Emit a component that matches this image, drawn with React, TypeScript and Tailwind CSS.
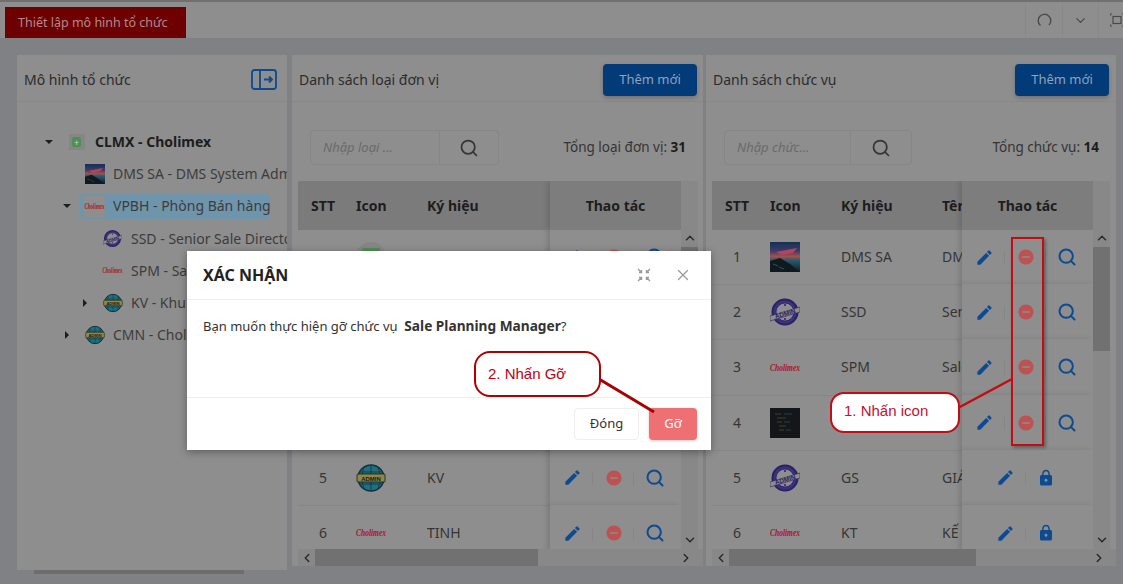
import React from "react";
import { MdEdit, MdRemoveCircle, MdLock } from "react-icons/md";
import { ChevronUp, ChevronDown, ChevronLeft, ChevronRight, Search, X } from "lucide-react";

const Photo = ({ s = 30 }: { s?: number }) => (
  <svg width={s} height={s} viewBox="0 0 30 30" className="shrink-0">
    <defs>
      <linearGradient id="sky" x1="0" y1="0" x2="0" y2="1">
        <stop offset="0" stopColor="#14304f" />
        <stop offset="0.3" stopColor="#3d3a6e" />
        <stop offset="0.48" stopColor="#a5504a" />
        <stop offset="0.6" stopColor="#2c5a70" />
        <stop offset="1" stopColor="#0e1e26" />
      </linearGradient>
    </defs>
    <rect width="30" height="30" fill="url(#sky)" />
    <path d="M0 19 L10 16 L20 22 L30 30 L0 30Z" fill="#0f1a20" />
    <path d="M6 10 L27 6 L23 11 L12 13Z" fill="#b0465c" />
    <path d="M3 22l5 2M9 25l5 2" stroke="#33505e" strokeWidth="1" />
  </svg>
);

const Code = ({ s = 30 }: { s?: number }) => (
  <svg width={s} height={s} viewBox="0 0 30 30" className="shrink-0">
    <rect width="30" height="30" fill="#14171a" />
    <path d="M5 6h6M7 10h9M7 14h5M9 18h7M9 22h5" stroke="#3f4330" strokeWidth="1" />
    <path d="M14 14h6M16 22h5M14 6h8" stroke="#24414d" strokeWidth="1" />
  </svg>
);

const Stamp = ({ s = 30 }: { s?: number }) => (
  <svg width={s} height={s} viewBox="0 0 30 30" className="shrink-0">
    <circle cx="15" cy="15" r="12.500" fill="#3a3180" stroke="#2a2260" strokeWidth="2" />
    <circle cx="15" cy="15" r="9" fill="#8e8e8e" stroke="#2a2260" strokeWidth="0.8" />
    <circle cx="15" cy="8" r="1" fill="#2a2260" />
    <circle cx="15" cy="22" r="1" fill="#2a2260" />
    <path d="M0 19 L30 10 L30 15 L0 24Z" fill="#8e8e8e" stroke="#2a2260" strokeWidth="0.6" />
    <text x="15" y="19" textAnchor="middle" fontSize="6.5" fontWeight="700" fill="#2a2260" transform="rotate(-16 15 16.500)" fontFamily="Liberation Sans, sans-serif">ADMIN</text>
  </svg>
);

const Globe = ({ s = 30 }: { s?: number }) => (
  <svg width={s} height={s} viewBox="0 0 30 30" className="shrink-0">
    <circle cx="15" cy="15" r="13" fill="#1f6f82" stroke="#12343d" strokeWidth="1.5" />
    <path d="M3 9h24M3 21h24M15 2v26M8 4q-4 11 0 22M22 4q4 11 0 22" stroke="#12343d" strokeWidth="0.8" fill="none" />
    <rect x="1" y="11" width="28" height="8" rx="1" fill="#8f8748" stroke="#1a1a10" strokeWidth="0.8" />
    <text x="15" y="17.500" textAnchor="middle" fontSize="6" fontWeight="700" fill="#1a1a10" fontFamily="Liberation Sans, sans-serif">ADMIN</text>
  </svg>
);

const Chol = ({ w = 30, cls = "text-[7.5px]" }: { w?: number; cls?: string }) => (
  <span
    className={`shrink-0 scale-y-150 text-center font-bold italic leading-none text-[#a8181e] ${cls}`}
    style={{ width: w, fontFamily: '"Liberation Serif", serif' }}
  >
    Cholimex
  </span>
);

const Plus = ({ box = 16, cls = "" }: { box?: number; cls?: string }) => (
  <span className={`flex items-center justify-center bg-[#868686] ${cls}`} style={{ width: box, height: box }}>
    <span
      className="flex items-center justify-center rounded-[2px] bg-[#4f8f55] text-[9px] leading-none text-[#c5dcc5]"
      style={{ width: box * 0.62, height: box * 0.62 }}
    >
      +
    </span>
  </span>
);

const Pencil = () => <MdEdit className="text-[#0c4a92]" size={19} />;
const Minus = () => <MdRemoveCircle className="text-[#bd5252]" size={18} />;
const Find = () => <Search className="text-[#0c4a92]" size={20} strokeWidth={2.4} />;
const Lock = () => <MdLock className="text-[#0c4a92]" size={18} />;

const Cell = ({ children, last }: { children: React.ReactNode; last?: boolean }) => (
  <div className="relative flex w-[41px] items-center justify-center">
    {children}
    {!last && <span className="absolute right-0 top-[3px] h-[14px] w-px bg-[#868686]" />}
  </div>
);

type Row = { n: number; icon: React.ReactNode; code: string; name?: string; locked?: boolean };

function Table({ rows, withName, width, thumb }: { rows: Row[]; withName: boolean; width: number; thumb: number }) {
  return (
    <div className="flex flex-col">
      <div className="flex h-[368px]">
        <div className="overflow-hidden" style={{ width }}>
          <div className="flex h-[49px] items-center bg-[#7b7b7b] text-sm font-bold text-[#1d1d1d]">
            <div className="w-[50px] shrink-0 text-center">STT</div>
            <div className="w-[71px] shrink-0 pl-2">Icon</div>
            <div className="w-[109px] shrink-0 pl-2">Ký hiệu</div>
            <div className="w-[20px] shrink-0 overflow-hidden">{withName ? "Tên" : ""}</div>
            <div className="ml-auto flex h-full w-[131px] shrink-0 items-center justify-center bg-[#7d7d7d] shadow-[-3px_0_5px_rgba(0,0,0,0.12)]">Thao tác</div>
          </div>
          <div className="h-[319px] overflow-hidden">
            {rows.map((r) => (
              <div key={r.n} className="flex h-[55.2px] items-center border-b border-[#868686] text-sm text-[#353535]">
                <div className="w-[50px] shrink-0 text-center">{r.n}</div>
                <div className="flex w-[71px] shrink-0 items-center pl-2">{r.icon}</div>
                <div className="w-[109px] shrink-0 pl-2">{r.code}</div>
                <div className="w-[20px] shrink-0 overflow-hidden whitespace-nowrap">{r.name}</div>
                <div className="ml-auto flex h-[56px] w-[131px] shrink-0 items-center justify-center bg-[#8e8e8e] pr-[4px] shadow-[-3px_0_5px_rgba(0,0,0,0.12)]">
                  {r.locked ? (
                    <>
                      <Cell><Pencil /></Cell>
                      <Cell last><Lock /></Cell>
                    </>
                  ) : (
                    <>
                      <Cell><Pencil /></Cell>
                      <Cell><Minus /></Cell>
                      <Cell last><Find /></Cell>
                    </>
                  )}
                </div>
              </div>
            ))}
          </div>
        </div>
        <div className="flex w-[17px] flex-col bg-[#888888]">
          <div className="h-[48px]" />
          <div className="flex h-[18px] items-center justify-center"><ChevronUp size={14} strokeWidth={2.5} className="text-[#2a2a2a]" /></div>
          <div className="h-[104px] bg-[#717171]" />
          <div className="flex-1" />
          <div className="flex h-[18px] items-center justify-center"><ChevronDown size={14} strokeWidth={2.5} className="text-[#2a2a2a]" /></div>
        </div>
      </div>
      <div className="flex h-[17px] items-center bg-[#888888]">
        <div className="flex w-[17px] justify-center"><ChevronLeft size={14} strokeWidth={2.5} className="text-[#2a2a2a]" /></div>
        <div className="h-full bg-[#717171]" style={{ width: thumb }} />
        <div className="flex-1" />
        <div className="flex w-[34px] justify-center"><ChevronRight size={14} strokeWidth={2.5} className="text-[#2a2a2a]" /></div>
      </div>
    </div>
  );
}

function ListPanel({ title, ph, inputW, btnW, totalLabel, total, rows, withName, width, tableW, thumb, btnPad }: {
  title: string; ph: string; inputW: number; btnW: number; totalLabel: string; total: number; rows: Row[]; withName: boolean; width: number; tableW: number; thumb: number; btnPad: number;
}) {
  return (
    <section className="flex flex-col bg-[#8e8e8e]" style={{ width }}>
      <header className="flex h-[47px] items-center justify-between border-b border-[#888888] pl-[7px] pt-[3px] text-sm text-[#2c2c2c]" style={{ paddingRight: btnPad }}>
        <span>{title}</span>
        <button className="h-[32px] w-[94px] rounded bg-[#033a78] text-[13px] text-[#8fa3bd] shadow-[0_2px_4px_rgba(0,0,0,0.2)]">Thêm mới</button>
      </header>
      <div className="flex h-[79px] items-end justify-between pb-[16px] pl-[18px] pr-[17px]">
        <div className="flex h-[35px] rounded border border-[#868686]">
          <div className="flex items-center border-r border-[#868686] pl-3 text-[13px] italic text-[#6a6a6a]" style={{ width: inputW }}>{ph}</div>
          <div className="flex items-center justify-center" style={{ width: btnW }}><Search size={20} strokeWidth={2.1} className="text-[#353535]" /></div>
        </div>
        <span className="flex h-[35px] items-center text-[13.5px] text-[#353535]"><span>{totalLabel}: <b className="text-[#1d1d1d]">{total}</b></span></span>
      </div>
      <div className="pl-[6px]"><Table rows={rows} withName={withName} width={tableW} thumb={thumb} /></div>
    </section>
  );
}

const Caret = ({ open }: { open?: boolean }) =>
  open ? (
    <span className="h-0 w-0 border-x-[4px] border-t-[4px] border-x-transparent border-t-[#1d1d1d]" />
  ) : (
    <span className="h-0 w-0 border-y-[4px] border-l-[4px] border-y-transparent border-l-[#1d1d1d]" />
  );

function Tree({ indent, caret, icon, label, bold, active }: { indent: number; caret?: "open" | "closed"; icon: React.ReactNode; label: string; bold?: boolean; active?: boolean }) {
  return (
    <div className="relative flex h-[32.2px] items-center whitespace-nowrap text-sm text-[#3c3c3c]" style={{ paddingLeft: indent }}>
      {caret && (
        <span className="absolute flex w-[8px] justify-center" style={{ left: indent - 21 }}>
          <Caret open={caret === "open"} />
        </span>
      )}
      <div className={`flex h-[25px] items-center ${active ? "-ml-[4px] w-[190px] rounded-sm bg-[#6f95ad] pl-[4px]" : ""}`}>
        <span className="flex w-[21px] items-center justify-center">{icon}</span>
        <span className={`ml-[8px] ${bold ? "font-bold text-[#1d1d1d]" : ""}`}>{label}</span>
      </div>
    </div>
  );
}

const rowsA: Row[] = [
  { n: 1, icon: <Plus box={30} cls="rounded-full" />, code: "" },
  { n: 2, icon: <Stamp />, code: "" },
  { n: 3, icon: <Chol />, code: "" },
  { n: 4, icon: <Code />, code: "" },
  { n: 5, icon: <Globe />, code: "KV" },
  { n: 6, icon: <Chol />, code: "TINH" },
];
const rowsB: Row[] = [
  { n: 1, icon: <Photo />, code: "DMS SA", name: "DMS" },
  { n: 2, icon: <Stamp />, code: "SSD", name: "Senior" },
  { n: 3, icon: <Chol />, code: "SPM", name: "Sale" },
  { n: 4, icon: <Code />, code: "", name: "" },
  { n: 5, icon: <Stamp />, code: "GS", name: "GIÁM", locked: true },
  { n: 6, icon: <Chol />, code: "KT", name: "KẾ TOÁN", locked: true },
];

export default function App() {
  return (
    <div className="relative flex h-[584px] w-[1123px] flex-col overflow-hidden bg-[#7f8185]" style={{ fontFamily: '"Noto Sans", sans-serif' }}>
      <div className="h-[2px] bg-[#707070]" />
      <div className="flex h-[36px] items-end justify-between bg-[#8e8e8e] pl-[5px]">
        <div className="flex h-[31px] w-[181px] items-center bg-[#6d0000] pl-[13px] pt-[1px] text-[12.5px] text-[#b38a8f]">Thiết lập mô hình tổ chức</div>
        <div className="flex h-[36px] items-center text-[#4a4a4a]">
          <div className="flex h-full w-[37px] items-center justify-center border-l border-[#888888]">
            <svg width="15" height="15" viewBox="0 0 15 15" fill="none" stroke="currentColor" strokeWidth="1.4"><path d="M3.500 12.500A6.300 6.300 0 1 1 12 12" /></svg>
          </div>
          <div className="flex h-full w-[36px] items-center justify-center border-l border-[#888888]"><ChevronDown size={15} /></div>
          <div className="flex h-full w-[25px] items-center justify-start border-l border-[#888888] pl-[11px]">
            <svg width="14" height="14" viewBox="0 0 14 14" fill="none" stroke="currentColor" strokeWidth="1.2" className="shrink-0"><path d="M0 3V1h2M12 1h2v2M14 11v2h-2M2 13H0v-2" /><rect x="3" y="3.500" width="8" height="7" /></svg>
          </div>
        </div>
      </div>

      <main className="flex flex-1 pl-[17px] pt-[17px]">
        <div className="mr-[5px] flex w-[270px] flex-col">
          <section className="h-[515px] overflow-hidden bg-[#8e8e8e]">
            <header className="flex h-[47px] items-center justify-between border-b border-[#888888] pl-[7px] pr-[10px] pt-[3px] text-sm text-[#2c2c2c]">
              <span>Mô hình tổ chức</span>
              <svg width="26" height="21" viewBox="0 0 26 21" fill="none" stroke="#0c4a92" strokeWidth="1.8">
                <rect x="1" y="1" width="24" height="19" rx="2.500" />
                <path d="M9 1v19" />
                <path d="M13 10.500h8M18 7.500l3 3-3 3" />
              </svg>
            </header>
            <div className="pt-[24px]">
              <Tree indent={49} caret="open" bold label="CLMX - Cholimex" icon={<Plus />} />
              <Tree indent={67} label="DMS SA - DMS System Administrator" icon={<Photo s={20} />} />
              <Tree indent={67} caret="open" active label="VPBH - Phòng Bán hàng" icon={<span className="flex h-[21px] w-[21px] items-center justify-center bg-[#8e8e8e]"><Chol w={20} cls="text-[5px]" /></span>} />
              <Tree indent={85} label="SSD - Senior Sale Director" icon={<Stamp s={19} />} />
              <Tree indent={85} label="SPM - Sale Planning Manager" icon={<Chol w={20} cls="text-[5px]" />} />
              <Tree indent={85} caret="closed" label="KV - Khu vực" icon={<Globe s={20} />} />
              <Tree indent={67} caret="closed" label="CMN - Cholimex Miền Nam" icon={<Globe s={20} />} />
            </div>
          </section>
          <div className="ml-[17px] h-[4px] w-[210px] bg-[#6d6d6d]" />
        </div>
        <div className="mr-[3px] h-[517px]">
          <ListPanel width={411} tableW={383} thumb={223} btnPad={6} title="Danh sách loại đơn vị" ph="Nhập loại ..." inputW={129} btnW={58} totalLabel="Tổng loại đơn vị" total={31} rows={rowsA} withName={false} />
        </div>
        <div className="h-[517px]">
          <ListPanel width={410} tableW={381} thumb={247} btnPad={7} title="Danh sách chức vụ" ph="Nhập chức..." inputW={126} btnW={60} totalLabel="Tổng chức vụ" total={14} rows={rowsB} withName />
        </div>
      </main>

      {/* dialog */}
      <div className="absolute left-[187px] top-[251px] flex h-[199px] w-[524px] flex-col bg-white shadow-[0_2px_8px_rgba(0,0,0,0.35)]">
        <div className="flex h-[49px] items-center justify-between border-b border-[#eeeeee] pl-[16px] pr-[19px]">
          <span className="text-base font-bold text-[#222]">XÁC NHẬN</span>
          <div className="flex items-center gap-[23px] text-[#9a9a9a]">
            <svg width="14" height="14" viewBox="0 0 14 14" fill="none" stroke="currentColor" strokeWidth="1.4"><path d="M1 1l3.500 3.500M13 1L9.500 4.500M1 13l3.500-3.500M13 13L9.500 9.500M4.500 2v2.500H2M9.500 2v2.500H12M4.500 12V9.500H2M9.500 12V9.500H12" /></svg>
            <X size={18} strokeWidth={1.6} />
          </div>
        </div>
        <div className="h-[98px] border-b border-[#eeeeee] pl-[16px] pt-[16px] text-[13px] text-[#333]">
          Bạn muốn thực hiện gỡ chức vụ&nbsp; <b className="text-[13.7px] text-[#333]">Sale Planning Manager</b>?
        </div>
        <div className="flex flex-1 items-center justify-end gap-[10px] pr-[14px]">
          <button className="h-[32px] w-[65px] rounded border border-[#eeeeee] bg-white text-[13px] text-[#333]">Đóng</button>
          <button className="h-[32px] w-[48px] rounded bg-[#ef7072] text-[13px] text-white shadow-[0_1px_3px_rgba(0,0,0,0.2)]">Gỡ</button>
        </div>
      </div>

      {/* annotations */}
      <div className="absolute left-[1011px] top-[237px] h-[209px] w-[33px] border-2 border-[#c40c12] shadow-[2px_2px_3px_rgba(0,0,0,0.3)]" />
      <svg width="1123" height="584" className="pointer-events-none absolute left-0 top-0">
        <path d="M1012 379 L958 408" stroke="#c40c12" strokeWidth="2.5" />
        <path d="M599 379 L654 412" stroke="#a80000" strokeWidth="3" />
      </svg>
      <div className="absolute left-[830px] top-[392px] flex h-[41px] w-[130px] items-center rounded-[14px] border-2 border-[#c40c12] bg-white pb-[3px] pl-[12px] text-[15px] text-[#c8102e]" style={{ fontFamily: '"Liberation Sans", sans-serif' }}>1. Nhấn icon</div>
      <div className="absolute left-[474px] top-[351px] flex h-[46px] w-[127px] items-start rounded-[16px] border-2 border-[#b00000] bg-white pl-[12px] pt-[10px] text-[15px] text-[#c00010]" style={{ fontFamily: '"Liberation Sans", sans-serif' }}>2. Nhấn Gỡ</div>
    </div>
  );
}
